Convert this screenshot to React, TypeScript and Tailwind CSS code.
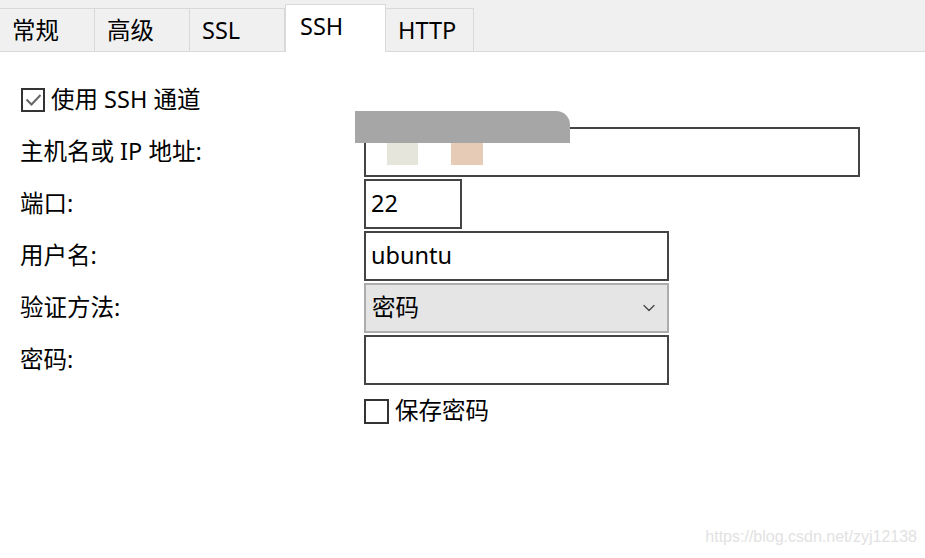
import { ChevronDown } from 'lucide-react'

const tabs = [
  { name: "常规", w: "w-[95px]" },
  { name: "高级", w: "w-[95px]" },
  { name: "SSL", w: "w-[95px]" },
  { name: "SSH", w: "w-[101px]", active: true },
  { name: "HTTP", w: "w-[88px]" },
]

function Field({ label, children }: { label: string; children: React.ReactNode }) {
  return (
    <div className="flex items-center h-[50px]">
      <div className="w-[364px] pl-5">{label}</div>
      {children}
    </div>
  )
}

export default function App() {
  return (
    <div
      className="relative w-[925px] h-[558px] bg-white text-[23.5px] text-black overflow-hidden"
      style={{ fontFamily: '"Noto Sans", "Noto Sans CJK SC", sans-serif' }}
    >
      {/* tab strip */}
      <div className="h-[52px] bg-[#f0f0f0] border-b border-[#d9d9d9] flex items-end">
        {tabs.map((t) =>
          t.active ? (
            <div
              key={t.name}
              className={`${t.w} h-[48px] -mb-px bg-white border-x border-t border-[#d9d9d9] pl-[14px] pt-[3px] leading-[36px]`}
            >
              {t.name}
            </div>
          ) : (
            <div
              key={t.name}
              className={`${t.w} h-[43px] border-t border-r border-[#d9d9d9] pl-[12px] pt-[3px] leading-[36px]`}
            >
              {t.name}
            </div>
          )
        )}
      </div>

      <div className="flex flex-col pt-[35px]">
        <label className="flex items-center gap-[6px] pl-[21px] h-[26px]">
          <span className="w-[24px] h-[24px] border-2 border-[#333] flex items-center justify-center">
            <svg width="17" height="14" viewBox="0 0 17 14" fill="none">
              <path d="M1.5 6.5 L6.5 11.5 L15.5 2" stroke="#666" strokeWidth="2" />
            </svg>
          </span>
          使用 SSH 通道
        </label>

        <div className="flex flex-col gap-[2px] mt-[14px]">
          <Field label="主机名或 IP 地址:">
            <div className="relative w-[496px] h-[50px] border-2 border-[#444]">
              <div className="absolute left-[-11px] top-[-18px] w-[215px] h-[32px] bg-[#a6a6a6] rounded-tr-[14px]" />
              <div className="absolute left-[21px] top-[14px] w-[31px] h-[22px] bg-[#e5e5dc]" />
              <div className="absolute left-[85px] top-[14px] w-[32px] h-[22px] bg-[#e6ccb6]" />
            </div>
          </Field>
          <Field label="端口:">
            <div className="w-[98px] h-[50px] border-2 border-[#444] px-[5px] leading-[44px]">22</div>
          </Field>
          <Field label="用户名:">
            <div className="w-[305px] h-[50px] border-2 border-[#444] px-[5px] leading-[44px]">ubuntu</div>
          </Field>
          <Field label="验证方法:">
            <div className="w-[305px] h-[50px] border-2 border-[#adadad] bg-[#e5e5e5] px-[6px] flex items-center justify-between">
              <span>密码</span>
              <ChevronDown size={20} strokeWidth={1.5} className="text-[#444] mr-[2px]" />
            </div>
          </Field>
          <Field label="密码:">
            <div className="w-[305px] h-[50px] border-2 border-[#444]" />
          </Field>
        </div>

        <label className="flex items-center gap-[6px] pl-[364px] mt-[13px] h-[26px]">
          <span className="w-[25px] h-[25px] border-2 border-[#333]" />
          保存密码
        </label>
      </div>

      <div
        className="absolute right-[8px] bottom-[9px] text-[16px] text-[#e2e2e2]"
        style={{ fontFamily: '"Liberation Sans", Arial, sans-serif' }}
      >
        https://blog.csdn.net/zyj12138
      </div>
    </div>
  )
}
